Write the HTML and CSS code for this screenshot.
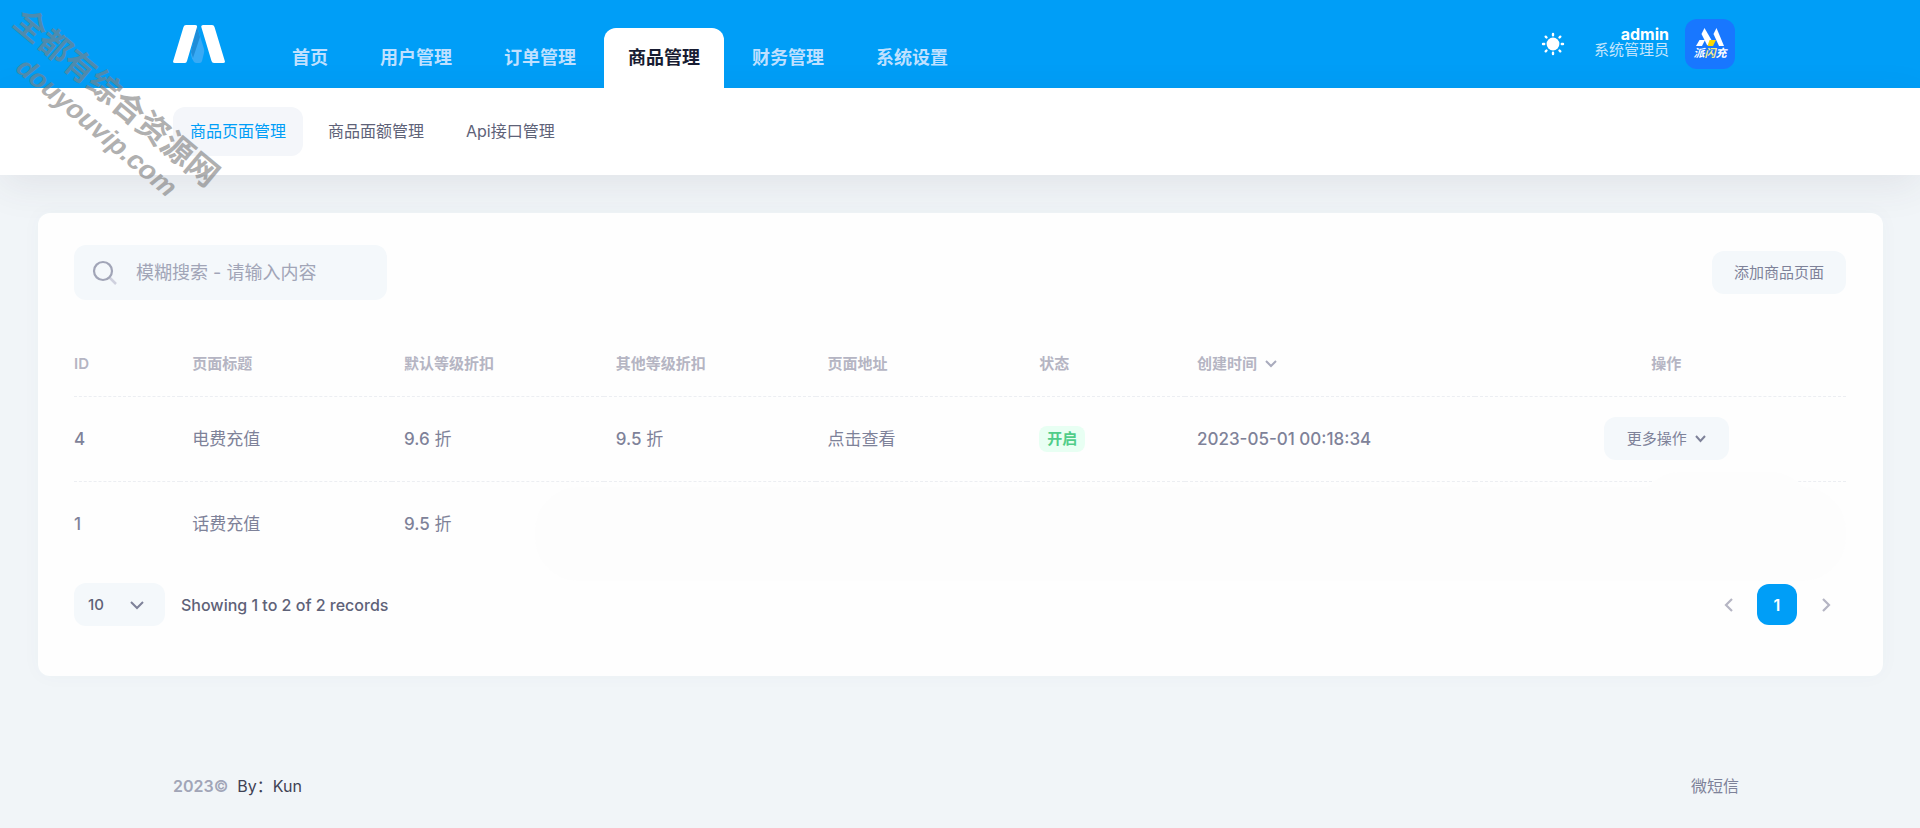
FILE: index.html
```html
<!DOCTYPE html>
<html lang="zh-CN">
<head>
<meta charset="utf-8">
<title>商品页面管理</title>
<link rel="stylesheet" href="styles.css">
</head>
<body>
<header class="header">
  <div class="container header-inner">
    <a class="logo" href="#" aria-label="Home">
      <svg width="52" height="38" viewBox="0 0 52 38">
        <path d="M24 1L18 27Q17.500 30 19 33.500L21 37Q22 38 23.500 38H26.500Q28.500 38 29 36L31 28Q31.500 26 31 24Z" fill="#38aaf5"/>
        <path d="M24 1L18 27L20 33L27 12Z" fill="#1f8dd8"/>
        <path d="M13 0H22Q24.500 0 24 2L14 36Q13.500 38 12 38H2Q-.5 38 .2 36L10.500 2Q11 0 13 0Z" fill="#fff"/>
        <path d="M30 0H39Q41 0 41.500 2L51.800 36Q52.500 38 50 38H41Q39 38 38.500 36L28.300 2Q28 0 30 0Z" fill="#fff"/>
      </svg>
    </a>
    <nav class="tabs">
      <a class="tab" href="#">首页</a>
      <a class="tab" href="#">用户管理</a>
      <a class="tab" href="#">订单管理</a>
      <a class="tab active" href="#">商品管理</a>
      <a class="tab" href="#">财务管理</a>
      <a class="tab" href="#">系统设置</a>
    </nav>
    <div class="user">
      <button class="theme" type="button" aria-label="Theme">
        <svg width="24" height="24" viewBox="0 0 24 24" stroke="#fff" stroke-width="2.400" stroke-linecap="round">
          <circle cx="12" cy="12" r="6.400" fill="#fff" stroke="none"/>
          <path d="M12 2V3.200M12 20.800V22M2 12H3.200M20.800 12H22M4.700 4.700L5.500 5.500M18.500 18.500L19.300 19.300M4.700 19.300L5.500 18.500M18.500 5.500L19.300 4.700"/>
        </svg>
      </button>
      <div class="who">
        <span class="name">admin</span>
        <span class="role">系统管理员</span>
      </div>
      <a class="avatar" href="#">
        <svg width="28" height="18" viewBox="0 0 28 18">
          <path d="M8.500 0L16 13L14 18L11 17L5.500 6Z" fill="#fff"/>
          <path d="M3.500 12H9L6 18H0Z" fill="#fff"/>
          <path d="M20.500 0L28 18H23L17.500 6Z" fill="#fff"/>
          <path d="M13.500 12H20L17 18H11.500Z" fill="#fcd800"/>
        </svg>
        <span class="brand">派<i class="bolt">闪</i>充</span>
      </a>
    </div>
  </div>
</header>
<div class="subbar">
  <nav class="container subnav">
    <a class="sub active" href="#">商品页面管理</a>
    <a class="sub" href="#">商品面额管理</a>
    <a class="sub" href="#">Api接口管理</a>
  </nav>
</div>
<main class="card">
  <div class="toolbar">
    <label class="search">
      <svg width="26" height="26" viewBox="0 0 26 26" fill="none" stroke="#a1a5b7" stroke-width="2.200">
        <path d="M18 18L24 24" stroke="#cfd1de" stroke-width="2.500"/>
        <circle cx="11" cy="11" r="9"/>
      </svg>
      <input type="text" aria-label="搜索" placeholder="模糊搜索 - 请输入内容">
    </label>
    <button class="btn" type="button">添加商品页面</button>
  </div>
  <div class="table-wrap">
    <table class="grid">
      <colgroup><col class="c-id"><col class="c-std"><col class="c-std"><col class="c-std"><col class="c-std"><col class="c-state"><col class="c-time"><col></colgroup>
      <thead>
        <tr>
          <th>ID</th><th>页面标题</th><th>默认等级折扣</th><th>其他等级折扣</th><th>页面地址</th><th>状态</th>
          <th>创建时间 <svg class="sort" width="12" height="8" viewBox="0 0 12 8" fill="none" stroke="#a9abbd" stroke-width="2"><path d="M1 1L6 6L11 1"/></svg></th>
          <th class="center">操作</th>
        </tr>
      </thead>
      <tbody>
        <tr>
          <td><span class="num">4</span></td><td>电费充值</td><td><span class="num">9.6</span> 折</td><td><span class="num">9.5</span> 折</td><td>点击查看</td>
          <td><span class="badge">开启</span></td>
          <td><span class="num">2023-05-01 00:18:34</span></td>
          <td class="center"><button class="btn more" type="button">更多操作 <svg width="11" height="8" viewBox="0 0 11 8" fill="none" stroke="#7e8299" stroke-width="2"><path d="M1 1L5.500 6L10 1"/></svg></button></td>
        </tr>
        <tr>
          <td><span class="num">1</span></td><td>话费充值</td><td><span class="num">9.5</span> 折</td><td></td><td></td><td></td><td></td><td></td>
        </tr>
      </tbody>
    </table>
    <div class="smudge"></div>
    <div class="smudge end"></div>
  </div>
  <div class="pager">
    <div class="length">
      <span class="select">
        <select aria-label="每页条数"><option>10</option><option>25</option></select>
        <svg width="14" height="9" viewBox="0 0 14 9" fill="none" stroke="#7e8299" stroke-width="2"><path d="M1 1L7 7L13 1"/></svg>
      </span>
      <span>Showing 1 to 2 of 2 records</span>
    </div>
    <nav class="pages">
      <button type="button" aria-label="Previous"><svg width="9" height="14" viewBox="0 0 9 14" fill="none" stroke="#b5b5c3" stroke-width="2.200"><path d="M8 1L2 7L8 13"/></svg></button>
      <button type="button" class="current">1</button>
      <button type="button" aria-label="Next"><svg width="9" height="14" viewBox="0 0 9 14" fill="none" stroke="#b5b5c3" stroke-width="2.200"><path d="M1 1L7 7L1 13"/></svg></button>
    </nav>
  </div>
</main>
<footer class="container footer">
  <div class="copy"><span>2023©</span><a href="#">By：Kun</a></div>
  <a href="#">微短信</a>
</footer>
<div class="watermark" aria-hidden="true">
  <span class="wm-name">全都有综合资源网</span>
  <span class="wm-site">douyouvip.com</span>
</div>
</body>
</html>
```
FILE: styles.css
```css
* { box-sizing: border-box; }
body {
  margin: 0;
  background: #f1f5f8;
  color: #7e8299;
  font: 400 16px/24px Inter, "Noto Sans CJK SC", sans-serif;
}
a { color: inherit; text-decoration: none; }
button, input, select { font: inherit; color: inherit; border: 0; margin: 0; }
svg { display: block; flex: none; }
.container { width: 82%; max-width: 1574px; margin: 0 auto; }

.header { background: #009ef7; }
.header-inner { display: flex; align-items: flex-end; height: 88px; }
.logo { align-self: center; }
.tabs { display: flex; gap: 4px; margin-left: 43px; }
.tab {
  padding: 15px 24px;
  border-radius: 12px 12px 0 0;
  font-size: 18px;
  line-height: 30px;
  font-weight: 700;
  color: #bfe0ff;
}
.tab.active { background: #fff; color: #181c32; }
.user { display: flex; align-items: center; align-self: center; margin: 0 12px 0 auto; }
.theme { padding: 0; background: none; margin-right: 29px; }
.who { display: flex; flex-direction: column; text-align: right; margin-right: 16px; padding-bottom: 4px; }
.name { color: #fff; font-weight: 700; line-height: 16px; }
.role { color: #c4e5fd; font-size: 15px; line-height: 16px; }
.avatar {
  display: flex; flex-direction: column; align-items: center; justify-content: center;
  width: 50px; height: 50px; border-radius: 12px; background: #1877ff;
}
.brand { color: #fff; font-size: 11px; line-height: 14px; font-weight: 700; font-style: italic; }
.bolt { color: #f4ea8a; }

.subbar { background: #fff; padding: 19px 0; box-shadow: 0 10px 40px rgba(70, 50, 80, .09); }
.subnav { display: flex; gap: 8px; }
.sub { padding: 12px 17px 13px; border-radius: 12px; color: #5e6278; }
.sub.active { background: #f4f6fa; color: #009ef7; }

.card {
  position: relative;
  margin: 38px 37px 0 38px;
  padding: 32px 37px 50px 36px;
  border-radius: 12px;
  background: #fefefe;
  box-shadow: 0 0 20px rgba(76, 87, 125, .03);
}
.toolbar { display: flex; align-items: center; justify-content: space-between; }
.search {
  display: flex; align-items: center; gap: 18px;
  width: 313px; height: 55px; padding: 0 18px; border-radius: 12px;
  background: #f4f8fb;
}
.search input { flex: 1; min-width: 0; padding: 0; background: none; outline: 0; font-size: 18px; }
.search input::placeholder { color: #a1a5b7; opacity: 1; }
.btn {
  padding: 0 22px; height: 43px; border-radius: 12px;
  background: #f4f8fb; color: #7e8299; font-size: 15px; line-height: 41px;
}
.table-wrap { position: relative; margin-top: 30px; }
.grid { width: 100%; table-layout: fixed; border-collapse: collapse; }
.c-id { width: 6%; }
.c-std { width: 11.95%; }
.c-state { width: 8.9%; }
.c-time { width: 16.35%; }
.grid th, .grid td { padding: 0 12px; text-align: left; }
.grid th:first-child, .grid td:first-child { padding-left: 0; }
.grid th:last-child, .grid td:last-child { padding-right: 0; }
.grid th { height: 66px; padding-top: 2px; border-bottom: 1px dashed #eceef2; font-size: 15px; font-weight: 600; color: #b5b5c3; }
.grid td { height: 85px; font-size: 17px; }
.num { font-weight: 500; }
.grid tbody tr:not(:last-child) td { border-bottom: 1px dashed #eceef2; }
.grid .center { text-align: center; }
.sort { display: inline-block; margin-left: 4px; vertical-align: 1px; }
.badge {
  display: inline-block; padding: 0 8px; border-radius: 8px;
  background: #e8fff3; color: #50cd89; font-size: 15px; line-height: 26px; font-weight: 700;
}
.more { padding: 0 23px; }
.more svg { display: inline-block; margin-left: 4px; vertical-align: 1px; }
.smudge {
  position: absolute; left: 26%; right: 0; bottom: -15px; height: 94px;
  border-radius: 44px; background: #fdfdfd; pointer-events: none;
}
.smudge.end { left: auto; right: 32px; width: 10%; bottom: 4px; height: 90px; }
.pager { display: flex; align-items: center; justify-content: space-between; margin-top: 17px; color: #5e6278; position: relative; }
.length { display: flex; align-items: center; gap: 16px; font-weight: 500; }
.select { position: relative; }
.select select {
  display: block; width: 91px; height: 43px; padding: 0 14px;
  appearance: none; border-radius: 12px; background: #f4f8fb; font-size: 15px;
}
.select svg { position: absolute; right: 21px; top: 18px; pointer-events: none; }
.pages { display: flex; gap: 9px; }
.pages button {
  display: grid; place-items: center; width: 40px; height: 41px; padding: 0;
  border-radius: 12px; background: none; font-weight: 600;
}
.pages .current { background: #009ef7; color: #fff; }

.footer { display: flex; justify-content: space-between; padding: 98px 8px 30px 0; }
.copy { display: flex; gap: 9px; }
.copy span { color: #a1a5b7; font-weight: 600; }
.copy a { color: #3f4254; }

.watermark {
  position: absolute; left: 33px; top: -2px;
  display: flex; flex-direction: column;
  color: #808080; opacity: .62;
  font-weight: 700; white-space: nowrap;
  transform: rotate(40deg); transform-origin: 0 0; pointer-events: none;
}
.wm-name { font-family: "Noto Sans CJK SC", sans-serif; font-size: 32px; line-height: 40px; }
.wm-site { font-family: "Liberation Sans", sans-serif; font-size: 27px; line-height: 36px; padding-left: 32px; font-style: italic; }
```
